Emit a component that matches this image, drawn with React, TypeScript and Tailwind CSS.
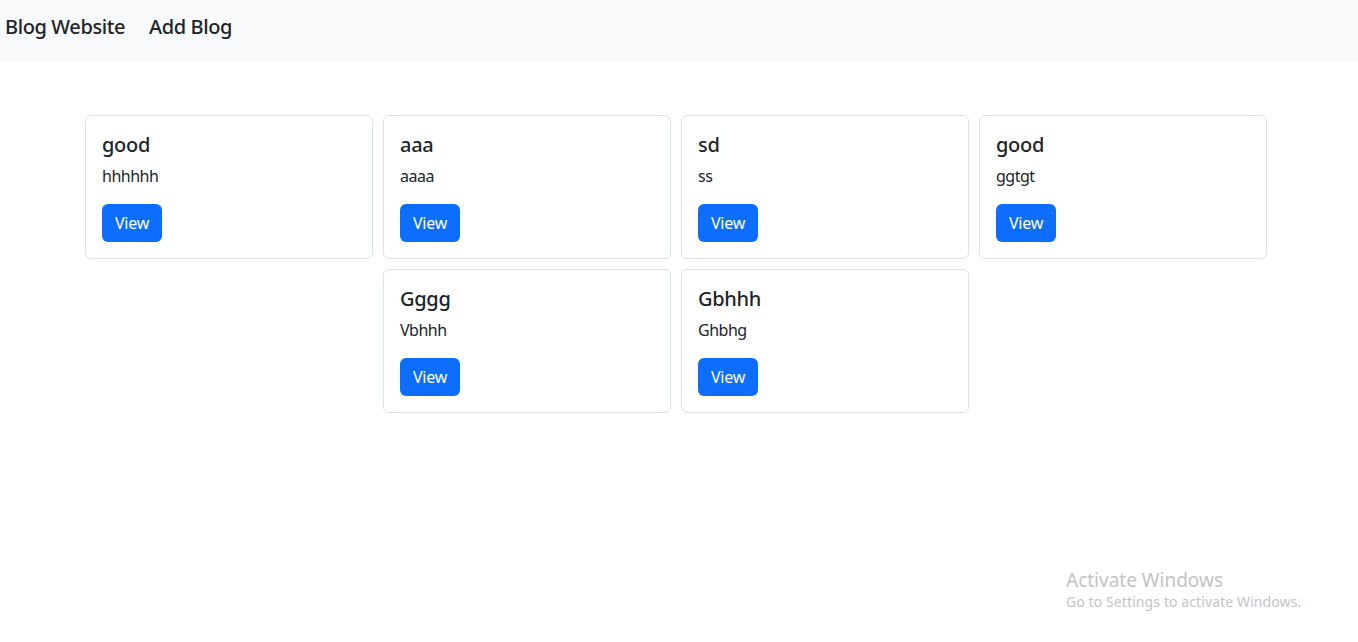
import React from "react";

const posts = [
  { title: "good", body: "hhhhhh" },
  { title: "aaa", body: "aaaa" },
  { title: "sd", body: "ss" },
  { title: "good", body: "ggtgt" },
  { title: "Gggg", body: "Vbhhh" },
  { title: "Gbhhh", body: "Ghbhg" },
];

export default function App() {
  return (
    <div
      className="relative min-h-[642px] w-full bg-white text-[#212529]"
      style={{ fontFamily: '"Noto Sans", "Open Sans", sans-serif' }}
    >
      <nav className="flex h-[62px] items-start gap-[24px] bg-[#f8f9fa] pl-[5px] pt-[12px]">
        <span className="text-[20px] leading-[30px] font-medium tracking-[-0.4px]">Blog Website</span>
        <span className="text-[20px] leading-[30px] font-medium tracking-[-0.4px]">Add Blog</span>
      </nav>
      <div className="mt-[53px] flex w-[1352px] flex-wrap justify-center gap-[10px]">
        {posts.map((p, i) => (
          <div
            key={i}
            className="w-[288px] rounded-[6px] border border-[#dee2e6] bg-white p-[16px]"
          >
            <div className="mb-[7px] pt-[1px] text-[20px] leading-[24px] font-medium tracking-[-0.3px]">
              {p.title}
            </div>
            <div className="mb-[16px] text-[16px] leading-[24px] tracking-[-0.5px]">{p.body}</div>
            <button className="h-[38px] w-[60px] rounded-[6px] bg-[#0d6efd] text-[16px] leading-[24px] text-white tracking-[-0.2px]">
              View
            </button>
          </div>
        ))}
      </div>
      <div className="pointer-events-none absolute left-[1066px] top-[568px] text-[#c4c4c4]">
        <div className="text-[19px] leading-[24px]">Activate Windows</div>
        <div className="text-[14px] leading-[20px] tracking-[0.1px]">Go to Settings to activate Windows.</div>
      </div>
    </div>
  );
}
